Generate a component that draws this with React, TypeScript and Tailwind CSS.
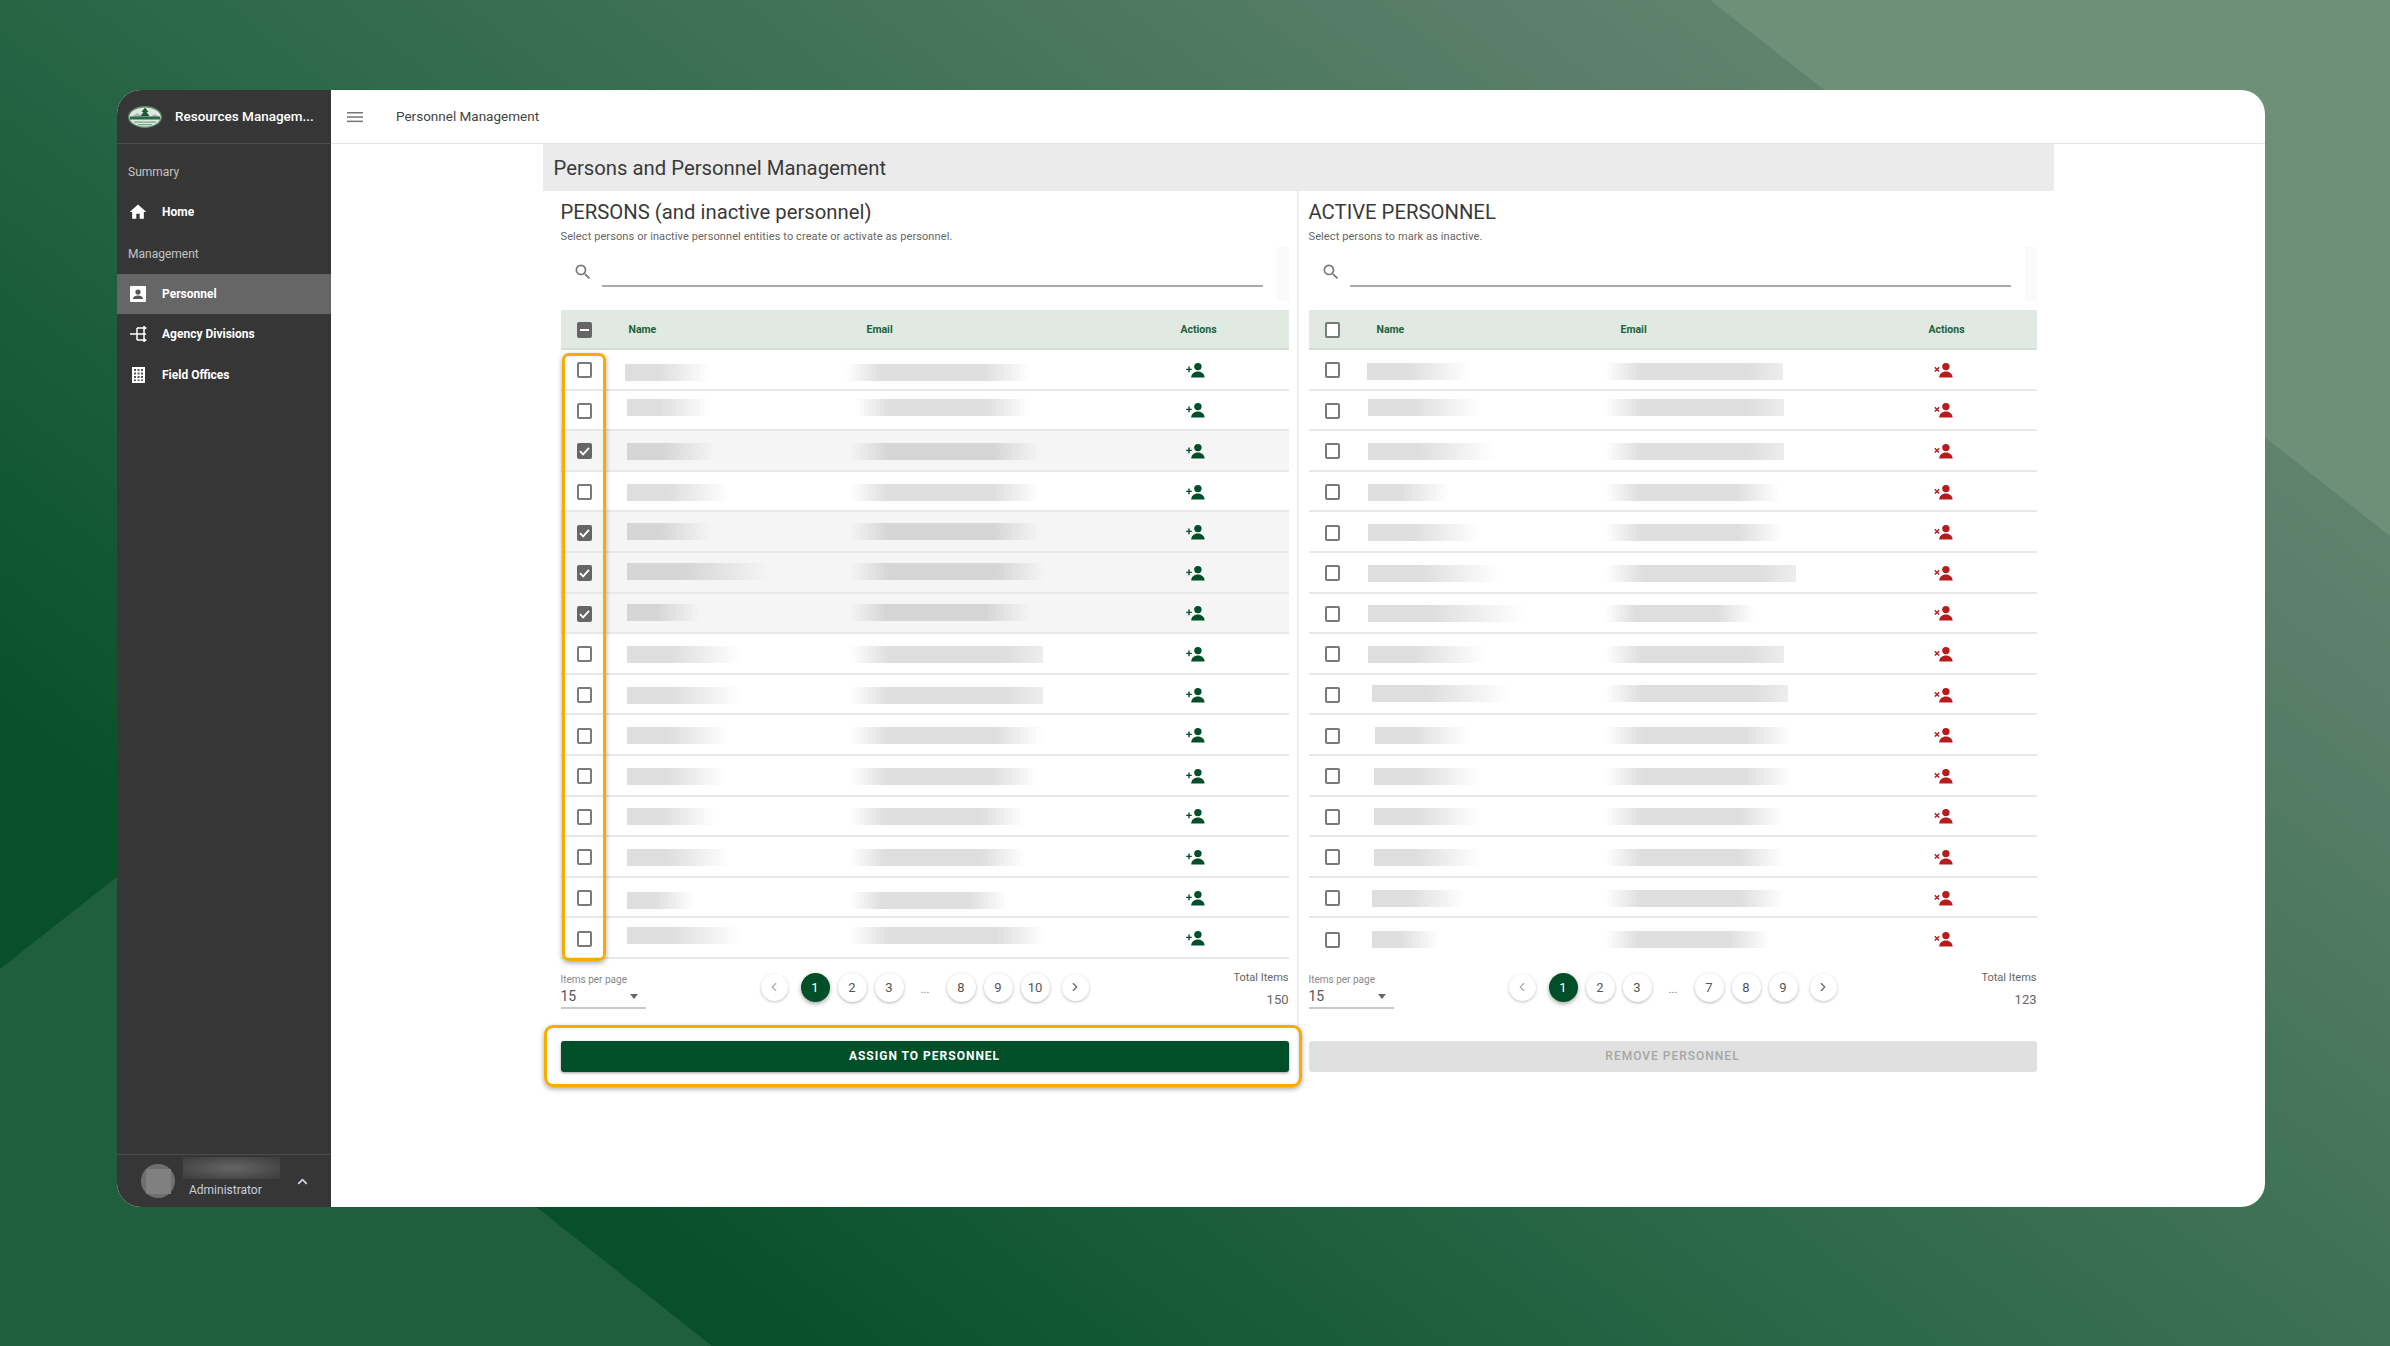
import React from "react";
import { ChevronUp, ChevronLeft, ChevronRight } from "lucide-react";

type Bar = [number, number, number?, boolean?];

const leftRows: { n: Bar; e: Bar; checked?: boolean }[] = [
  { n: [625, 710, 2], e: [845, 1030, 2] },
  { n: [627, 710, -3], e: [855, 1030, -3] },
  { n: [627, 715, 0], e: [850, 1040, 0], checked: true },
  { n: [627, 730, 0], e: [850, 1040, 0] },
  { n: [627, 710, -1], e: [850, 1040, -1], checked: true },
  { n: [627, 770, -2], e: [850, 1045, -2], checked: true },
  { n: [627, 700, -1], e: [850, 1030, -1], checked: true },
  { n: [627, 740, 0], e: [850, 1043, 0, true] },
  { n: [627, 740, 0], e: [850, 1043, 0, true] },
  { n: [627, 730, 0], e: [850, 1043, 0] },
  { n: [627, 725, 0], e: [850, 1038, 0] },
  { n: [627, 715, 0], e: [850, 1025, 0] },
  { n: [627, 730, 0], e: [850, 1025, 0] },
  { n: [627, 695, 2], e: [850, 1008, 2] },
  { n: [627, 740, -3], e: [850, 1045, -3] },
];

const rightRows: { n: Bar; e: Bar }[] = [
  { n: [1367, 1470, 1], e: [1605, 1783, 1, true] },
  { n: [1368, 1480, -3], e: [1605, 1784, -3, true] },
  { n: [1368, 1495, 0], e: [1605, 1784, 0, true] },
  { n: [1368, 1450, 0], e: [1605, 1780, 0] },
  { n: [1368, 1480, 0], e: [1605, 1783, 0] },
  { n: [1368, 1500, 0], e: [1605, 1796, 0, true] },
  { n: [1368, 1525, 0], e: [1605, 1755, 0] },
  { n: [1368, 1485, 0], e: [1605, 1784, 0, true] },
  { n: [1372, 1510, -2], e: [1605, 1788, -2, true] },
  { n: [1375, 1470, 0], e: [1605, 1792, 0] },
  { n: [1374, 1480, 0], e: [1605, 1792, 0] },
  { n: [1374, 1480, 0], e: [1605, 1784, 0] },
  { n: [1374, 1480, 0], e: [1605, 1784, 0] },
  { n: [1372, 1465, 0], e: [1605, 1784, 0] },
  { n: [1372, 1440, 0], e: [1605, 1770, 0] },
];

function BlurBar({ bar, origin, fadeIn }: { bar: Bar; origin: number; fadeIn?: boolean }) {
  const [start, end, dy = 0, sharp] = bar;
  const dark = 0.13;
  const bg = fadeIn
    ? `linear-gradient(90deg, rgba(0,0,0,0) 0%, rgba(0,0,0,${dark}) 20%, rgba(0,0,0,${dark}) ${sharp ? 80 : 75}%, rgba(0,0,0,${sharp ? 0.07 : 0}) 100%)`
    : `linear-gradient(90deg, rgba(0,0,0,${dark}) 0%, rgba(0,0,0,${dark}) 40%, rgba(0,0,0,0) 100%)`;
  return (
    <div
      className="h-[17px]"
      style={{ marginLeft: start - origin, width: end - start, transform: `translateY(${dy}px)`, background: bg }}
    />
  );
}

function Check({ state }: { state: "off" | "on" | "mixed" }) {
  if (state === "off")
    return <div className="w-[15px] h-[16px] rounded-[2px] border-2 border-[#7a7a7a] bg-white" />;
  return (
    <div className="w-[15px] h-[16px] rounded-[2px] bg-[#666666] flex items-center justify-center">
      {state === "on" ? (
        <svg viewBox="0 0 15 16" className="w-[15px] h-[16px]">
          <path d="M3 8.2l3.1 3.2L12 4.8" fill="none" stroke="#fff" strokeWidth="1.8" />
        </svg>
      ) : (
        <div className="w-[9px] h-[2px] bg-white" />
      )}
    </div>
  );
}

function PersonIcon({ kind }: { kind: "add" | "remove" }) {
  const color = kind === "add" ? "#004f28" : "#b71c1c";
  return (
    <svg viewBox="0 0 20 15" className="w-[20px] h-[15px]" fill={color}>
      <ellipse cx="11.9" cy="3.6" rx="3.7" ry="3.6" />
      <path d="M5.2 14.6c0-3.8 3-6.2 6.7-6.2s6.7 2.4 6.7 6.2z" />
      {kind === "add" ? (
        <path d="M2.3 3.6h1.4v2.1h2.1v1.4H3.7v2.1H2.3V7.100H.2V5.700h2.100z" />
      ) : (
        <path d="M1.300 3.700l1.700 1.700 1.700-1.700 1 1-1.700 1.700 1.700 1.700-1 1-1.700-1.700-1.700 1.700-1-1 1.700-1.700-1.700-1.700z" />
      )}
    </svg>
  );
}

function PageBtn({ label, active }: { label: string; active?: boolean }) {
  return (
    <div
      className={
        active
          ? "w-[29px] h-[29px] rounded-full bg-[#004f28] text-white flex items-center justify-center text-[13px] shadow-[0_2px_4px_rgba(0,0,0,0.35)]"
          : "w-[29px] h-[29px] rounded-full bg-white text-[#555] flex items-center justify-center text-[13px] shadow-[0_1px_3px_rgba(0,0,0,0.3)]"
      }
    >
      {label}
    </div>
  );
}

function ArrowBtn({ dir, dim }: { dir: "l" | "r"; dim?: boolean }) {
  const cls = dim ? "w-[14px] h-[14px] text-[#aaa]" : "w-[14px] h-[14px] text-[#666]";
  return (
    <div className="w-[27px] h-[27px] rounded-full bg-white flex items-center justify-center shadow-[0_1px_3px_rgba(0,0,0,0.25)]">
      {dir === "l" ? <ChevronLeft className={cls} /> : <ChevronRight className={cls} />}
    </div>
  );
}

function Pagination({ pages, total, pad }: { pages: string[]; total: string; pad: string }) {
  return (
    <div className="h-[82px] flex items-start pt-[14px] text-[#666]">
      <div className="w-[85px] shrink-0">
        <div className="text-[10px] leading-[12px] text-[#888] mt-[1px]">Items per page</div>
        <div className="h-[21px] border-b-2 border-[#c8c8c8] flex items-center justify-between pr-[8px] text-[14px] text-[#555] box-content">
          <span>15</span>
          <span className="w-0 h-0 border-l-[4px] border-r-[4px] border-t-[5px] border-l-transparent border-r-transparent border-t-[#666]" />
        </div>
      </div>
      <div className={pad + " flex items-center h-[29px]"}>
        <ArrowBtn dir="l" dim />
        <div className="w-[13px]" />
        <PageBtn label="1" active />
        <div className="w-[8px]" />
        <PageBtn label={pages[0]} />
        <div className="w-[8px]" />
        <PageBtn label={pages[1]} />
        <div className="w-[43px] text-center text-[11px] text-[#777] pt-[6px]">...</div>
        <PageBtn label={pages[2]} />
        <div className="w-[8px]" />
        <PageBtn label={pages[3]} />
        <div className="w-[8px]" />
        <PageBtn label={pages[4]} />
        <div className="w-[12px]" />
        <ArrowBtn dir="r" />
      </div>
      <div className="ml-auto text-right">
        <div className="text-[11px] leading-[13px] text-[#666] -mt-[2px]">Total Items</div>
        <div className="text-[13px] leading-[16px] mt-[8px] text-[#666]">{total}</div>
      </div>
    </div>
  );
}

function Panel({
  title,
  sub,
  cols,
  rows,
  origin,
  kind,
  headerCheck,
  pages,
  total,
  pad,
  panelCls,
  buttonLabel,
  highlight,
}: {
  title: string;
  sub: string;
  cols: string;
  rows: { n: Bar; e: Bar; checked?: boolean }[];
  origin: [number, number];
  kind: "add" | "remove";
  headerCheck: "off" | "mixed";
  pages: string[];
  total: string;
  pad: string;
  panelCls: string;
  buttonLabel: string;
  highlight?: boolean;
}) {
  return (
    <div className={panelCls}>
      <div className="text-[20.3px] leading-[24px] text-[#3a3a3a] pt-[9px] whitespace-nowrap">{title}</div>
      <div className="text-[11px] leading-[14px] text-[#666] mt-[6px] tracking-[0.1px]">{sub}</div>
      <div className="flex items-start h-[63px] mt-[3px]">
        <svg viewBox="0 0 24 24" className="w-[20px] h-[20px] ml-[12px] mt-[15px] shrink-0" fill="#777">
          <path d="M15.5 14h-.79l-.28-.27A6.47 6.47 0 0 0 16 9.500 6.500 6.500 0 1 0 9.500 16c1.610 0 3.090-.59 4.230-1.570l.27.28v.79l5 4.990L20.490 19l-4.990-5zm-6 0C7.010 14 5 11.990 5 9.500S7.010 5 9.500 5 14 7.010 14 9.500 11.990 14 9.500 14z" />
        </svg>
        <div className="w-[661px] ml-[9px] h-[40px] border-b-2 border-[#aaaaaa] shrink-0" />
        <div className="ml-[14px] w-[12px] h-[54px] bg-[#fafafa] shrink-0" />
      </div>
      <div className="relative">
        <div className={cols + " h-[40px] pt-[2px] bg-[#e1e9e3] border-b-2 border-[#d5ddd7] items-center text-[10.5px] font-bold text-[#1b6238]"}>
          <div className="flex justify-center"><Check state={headerCheck} /></div>
          <div className="pl-[20px]">Name</div>
          <div className={kind === "add" ? "pl-[21px]" : "pl-[15px]"}>Email</div>
          <div className="pl-[40px]">Actions</div>
        </div>
        {rows.map((r, i) => (
          <div
            key={i}
            className={
              cols +
              " h-[40.6px] pt-[2px] border-b-2 border-[#e8e8e8] items-center last:border-b-0 " +
              (r.checked ? "bg-[#f5f5f5]" : "bg-white")
            }
          >
            <div className="flex justify-center"><Check state={r.checked ? "on" : "off"} /></div>
            <BlurBar bar={r.n} origin={origin[0]} />
            <BlurBar bar={r.e} origin={origin[1]} fadeIn />
            <div className="pl-[45px] flex"><PersonIcon kind={kind} /></div>
          </div>
        ))}
        {highlight && (
          <div className="absolute left-[1px] top-[43px] w-[44px] h-[608px] rounded-[7px] border-[3px] border-[#f9ab00] shadow-[0_2px_5px_rgba(0,0,0,0.35)]" />
        )}
      </div>
      <Pagination pages={pages} total={total} pad={pad} />
      <div className="relative mb-[13px]">
        <div
          className={
            highlight
              ? "h-[31px] rounded-[3px] bg-[#004f28] text-white text-[12px] font-bold tracking-[1px] flex items-center justify-center shadow-[0_1px_3px_rgba(0,0,0,0.4)]"
              : "h-[31px] rounded-[3px] bg-[#e0e0e0] text-[#a6a6a6] text-[12px] font-medium tracking-[1px] flex items-center justify-center"
          }
        >
          {buttonLabel}
        </div>
        {highlight && (
          <div className="absolute -left-[17px] -right-[13px] -top-[16px] -bottom-[15px] rounded-[9px] border-[3px] border-[#f9ab00] shadow-[0_2px_5px_rgba(0,0,0,0.35)]" />
        )}
      </div>
    </div>
  );
}

function Logo() {
  return (
    <svg viewBox="0 0 34 22" className="w-[34px] h-[22px] shrink-0">
      <ellipse cx="17" cy="11" rx="16.300" ry="10.300" fill="#dfe8e0" stroke="#5a8c69" strokeWidth="1.400" />
      <path d="M2 12l7-5 5 3 3-2 5 3 5-3 5 4z" fill="#a5bcaa" />
      <path d="M17 1.500l3.500 4.500h-2l3 4h-9l3-4h-2z" fill="#1d5c35" />
      <rect x="2" y="10.500" width="30" height="3" fill="#2f6a46" />
      <path d="M6 15.500h22v1.200H6zM10 18h14v1.200H10z" fill="#7aa285" />
    </svg>
  );
}

function NavItem({ label, active, children }: { label: string; active?: boolean; children: React.ReactNode }) {
  return (
    <div
      className={
        "h-[40.6px] flex items-center pl-[13px] text-[12px] font-bold text-white " + (active ? "bg-[#666666]" : "")
      }
    >
      <div className="w-[32px] flex items-center">{children}</div>
      {label}
    </div>
  );
}

export default function App() {
  return (
    <div className="relative w-[2390px] h-[1346px] overflow-hidden bg-[linear-gradient(38deg,#07502a_19%,#276545_42%,#5d806c_80%,#6e8f7a_100%)] font-['Roboto',sans-serif]">
      <svg className="absolute inset-0" width="2390" height="1346" viewBox="0 0 2390 1346">
        <polygon points="1710,0 2390,0 2390,536" fill="#6e9079" />
        <polygon points="0,969 118,876 712,1346 0,1346" fill="#1f5f3d" />
      </svg>
      <div className="absolute left-[117px] top-[90px] w-[2148px] h-[1117px] rounded-[24px] overflow-hidden bg-white flex">
        <aside className="w-[214px] shrink-0 bg-[#363636] flex flex-col">
          <div className="h-[54px] border-b border-[#4c4c4c] flex items-center pl-[11px]">
            <Logo />
            <span className="ml-[13px] text-[13.5px] font-medium text-white whitespace-nowrap">Resources Managem...</span>
          </div>
          <div className="h-[48px] flex items-end pl-[11px] pb-[11px] text-[12px] text-[#c4c4c4]">Summary</div>
          <NavItem label="Home">
            <svg viewBox="0 0 24 24" className="w-[20px] h-[20px] -ml-[2px]" fill="#fff">
              <path d="M10 20v-6h4v6h5v-8h3L12 3 2 12h3v8z" />
            </svg>
          </NavItem>
          <div className="h-[41px] flex items-end pl-[11px] pb-[11px] text-[12px] text-[#c4c4c4]">Management</div>
          <NavItem label="Personnel" active>
            <svg viewBox="0 0 16 16" className="w-[16px] h-[16px]">
              <rect width="16" height="16" rx="1" fill="#fff" />
              <circle cx="8" cy="6" r="2.600" fill="#555" />
              <path d="M3 13c0-2.400 3-3.400 5-3.400s5 1 5 3.400z" fill="#555" />
            </svg>
          </NavItem>
          <NavItem label="Agency Divisions">
            <svg viewBox="0 0 18 18" className="w-[18px] h-[18px]" fill="none" stroke="#fff" strokeWidth="1.500">
              <path d="M0 9h9M7 3h8M7 9h9M7 15h8M7 3v12M14 1v16" />
              <path d="M14 1l3 2-3 2zM14 13l3 2-3 2z" fill="#fff" stroke="none" />
            </svg>
          </NavItem>
          <NavItem label="Field Offices">
            <svg viewBox="0 0 13 16" className="w-[13px] h-[16px] ml-[2px]">
              <rect width="13" height="16" fill="#fff" />
              <path d="M2 2h2v2H2zM5.500 2h2v2h-2zM9 2h2v2H9zM2 5.500h2v2H2zM5.500 5.500h2v2h-2zM9 5.500h2v2H9zM2 9h2v2H2zM5.500 9h2v2h-2zM9 9h2v2H9zM2 12.500h2V14H2zM5.500 12.500h2V14h-2zM9 12.500h2V14H9z" fill="#555" />
            </svg>
          </NavItem>
          <div className="mt-auto h-[53px] border-t border-[#4c4c4c] flex items-center pl-[24px]">
            <div className="w-[34px] h-[34px] rounded-full bg-[#6f6f6f] flex items-center justify-center shrink-0">
              <div className="w-[25px] h-[25px] bg-[#808080]" />
            </div>
            <div className="ml-[14px] flex flex-col -translate-y-[4px]">
              <div className="w-[97px] h-[22px] -ml-[6px] bg-[radial-gradient(ellipse_at_center,#666666_0%,#4c4c4c_60%,#3c3c3c_100%)]" />
              <div className="text-[12px] leading-[16px] text-[#c8cede] mt-[3px]">Administrator</div>
            </div>
            <ChevronUp className="w-[15px] h-[15px] text-[#c8cede] ml-[15px]" strokeWidth={3} />
          </div>
        </aside>
        <main className="flex-1 flex flex-col min-w-0">
          <div className="h-[54px] shrink-0 border-b border-[#e5e5e5] flex items-center pl-[16px]">
            <svg viewBox="0 0 16 12" className="w-[16px] h-[12px]" fill="#777">
              <rect y="1" width="16" height="1.500" />
              <rect y="5.300" width="16" height="1.500" />
              <rect y="9.600" width="16" height="1.500" />
            </svg>
            <span className="ml-[33px] text-[13.5px] text-[#444]">Personnel Management</span>
          </div>
          <div className="w-[1511px] mx-auto">
            <div className="h-[47px] pt-[1px] bg-[#ebebeb] pl-[11px] flex items-center text-[20.3px] text-[#3a3a3a]">
              Persons and Personnel Management
            </div>
            <div className="grid grid-cols-[756px_755px]">
              <Panel
                title="PERSONS (and inactive personnel)"
                sub="Select persons or inactive personnel entities to create or activate as personnel."
                cols="grid grid-cols-[48px_237px_295px_1fr]"
                rows={leftRows}
                origin={[609, 846]}
                kind="add"
                headerCheck="mixed"
                pages={["2", "3", "8", "9", "10"]}
                total="150"
                pad="ml-[115px]"
                panelCls="pl-[18px] pr-[8px] border-r-2 border-[#eeeeee]"
                buttonLabel="ASSIGN TO PERSONNEL"
                highlight
              />
              <Panel
                title="ACTIVE PERSONNEL"
                sub="Select persons to mark as inactive."
                cols="grid grid-cols-[48px_249px_283px_1fr]"
                rows={rightRows}
                origin={[1357, 1606]}
                kind="remove"
                headerCheck="off"
                pages={["2", "3", "7", "8", "9"]}
                total="123"
                pad="ml-[115px]"
                panelCls="pl-[10px] pr-[17px]"
                buttonLabel="REMOVE PERSONNEL"
              />
            </div>
          </div>
        </main>
      </div>
    </div>
  );
}
